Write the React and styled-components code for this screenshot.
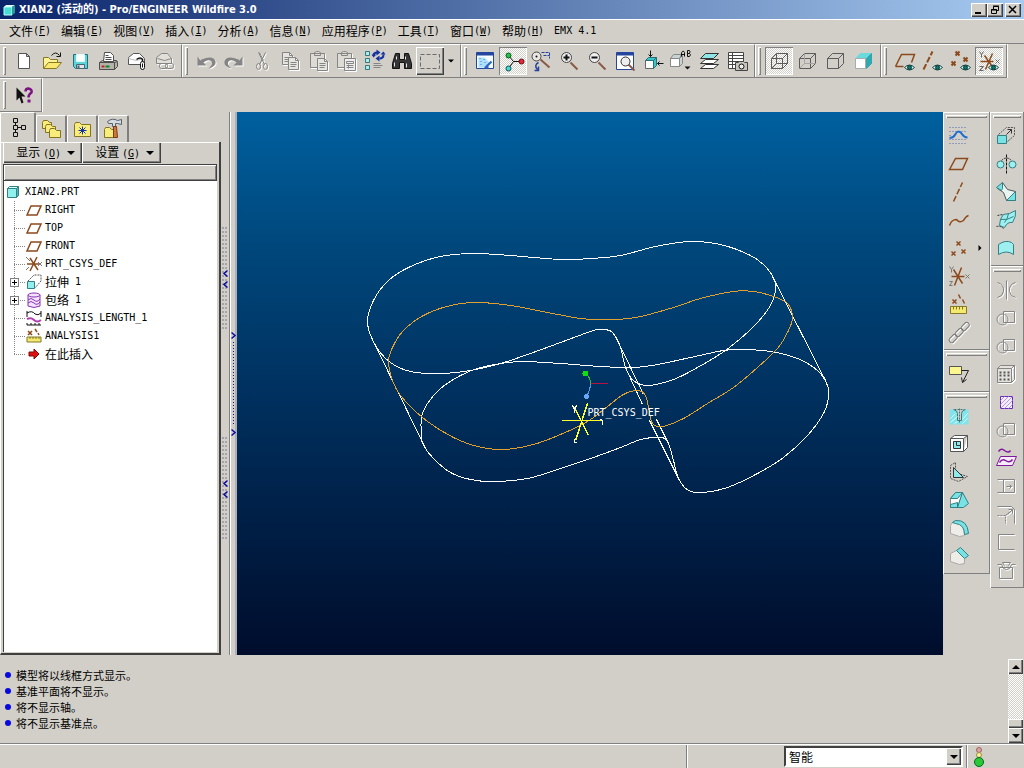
import React from 'react';
import styled, { createGlobalStyle, css } from 'styled-components';

const FACE = '#d2cfc8';
const SHADE = '#808080';
const DARK = '#404040';
const BROWN = '#8c4a1c';
const AQUA = '#8ff0ee';
const CJK = '"Noto Sans CJK SC", sans-serif';
const MONO = '"DejaVu Sans Mono", "Noto Sans CJK SC", monospace';

const GlobalStyle = createGlobalStyle`
  * { box-sizing: border-box; }
  body { margin: 0; background: ${FACE}; color: #000; font: 12px/16px ${CJK}; }
  button, select { font: inherit; color: inherit; margin: 0; padding: 0; border: 0; border-radius: 0; background: none; }
  ul { list-style: none; margin: 0; padding: 0; }
`;

const raised = css`
  background: ${FACE};
  box-shadow: inset 1px 1px 0 #fff, inset -1px -1px 0 ${DARK}, inset -2px -2px 0 ${SHADE};
`;
const checker = css`
  background: repeating-conic-gradient(#fff 0% 25%, ${FACE} 0% 50%) 0 0 / 2px 2px;
`;

const Page = styled.div`
  display: flex;
  flex-direction: column;
  min-height: 100vh;
`;

/* Title bar */
const TitleBar = styled.header`
  display: flex;
  align-items: center;
  height: 19px;
  padding: 0 3px;
  gap: 4px;
  background: linear-gradient(90deg, #0a246a, #a6caf0);
  color: #fff;
`;
const Title = styled.h1`
  flex: 1;
  margin: 0;
  font: bold 11px/16px "DejaVu Sans Condensed", "Noto Sans CJK SC", sans-serif;
`;
const WindowButtons = styled.div`
  display: flex;
`;
const WindowButton = styled.button`
  ${raised}
  display: grid;
  place-items: center;
  width: 16px;
  height: 14px;
  margin-left: ${(p) => (p.$apart ? '2px' : 0)};
`;

/* Menu */
const MenuBar = styled.nav`
  display: flex;
  align-items: center;
  gap: 10px;
  height: 25px;
  padding: 0 9px 2px;
  border-top: 1px solid #fff;
  border-bottom: 1px solid ${SHADE};
`;
const MenuItem = styled.button`
  display: flex;
  align-items: center;
  white-space: pre;
`;
const Latin = styled.span`
  font: 10px/16px ${MONO};
`;

/* Toolbars */
const ToolRow = styled.div`
  display: flex;
  height: 34px;
`;
const Handle = styled.span`
  flex: none;
  box-shadow: inset 1px 1px 0 #fff, inset -1px -1px 0 ${SHADE};
  width: ${(p) => (p.$flat ? 'auto' : '3px')};
  height: ${(p) => (p.$flat ? '3px' : '28px')};
  margin: ${(p) => (p.$flat ? '3px 2px 4px' : '0 4px 0 3px')};
`;
const ToolGroup = styled.div`
  display: flex;
  align-items: center;
  padding-right: 3px;
  border: solid;
  border-width: 1px 1px 1px 0;
  border-color: #fff ${SHADE} ${SHADE};
  box-shadow: 1px 0 0 #fff;
`;
const ToolButton = styled.button`
  position: relative;
  display: grid;
  place-items: center;
  width: 28px;
  height: 28px;
  flex: none;
  ${(p) => p.$pressed && css`
    ${checker}
    box-shadow: inset 1px 1px 0 ${SHADE}, inset -1px -1px 0 #fff;
  `}
  ${(p) => p.$raised && raised}
`;
const DropButton = styled.button`
  width: 13px;
  height: 28px;
  display: grid;
  place-items: center;
`;
const Drawing = styled.svg`
  display: block;
  flex: none;
  overflow: visible;
  fill: none;
  ${(p) => p.$dim && css`filter: drop-shadow(1px 1px 0 #fff);`}
`;

/* Work area */
const Work = styled.main`
  display: flex;
  flex: 1;
`;
const SidePanel = styled.aside`
  display: flex;
  flex-direction: column;
  width: 221px;
  flex: none;
`;
const Tabs = styled.div`
  display: flex;
  align-items: flex-end;
  height: 30px;
`;
const Tab = styled.button`
  display: grid;
  place-items: center;
  width: ${(p) => (p.$active ? '36px' : '31px')};
  height: ${(p) => (p.$active ? '30px' : '27px')};
  && {
    border-top: 1px solid #fff;
    border-left: 1px solid #fff;
    border-right: 2px solid ${SHADE};
    border-radius: 2px 2px 0 0;
  }
`;
const TabBody = styled.div`
  display: flex;
  flex-direction: column;
  flex: 1;
  padding: 0 2px 1px;
  border-right: 2px solid ${DARK};
  border-bottom: 2px solid ${DARK};
  border-left: 1px solid #fff;
  box-shadow: inset 0 1px 0 #fff;
`;
const PanelButtons = styled.div`
  display: flex;
  height: 21px;
`;
const PanelButton = styled.button`
  ${raised}
  display: flex;
  align-items: center;
  justify-content: flex-end;
  gap: 6px;
  width: 79px;
  padding-right: 7px;
`;
const ColumnHeader = styled.div`
  flex: none;
  height: 17px;
  margin-top: 1px;
  border: 1px solid ${DARK};
  box-shadow: inset 1px 1px 0 #fff, inset -1px -1px 0 ${SHADE};
`;
const Tree = styled.ul`
  flex: 1;
  background: #fff;
  border-left: 1px solid ${DARK};
  && { padding: 2px; }
`;
const TreeRow = styled.li`
  display: flex;
  align-items: center;
  height: 18px;
  white-space: pre;
`;
const Branch = styled.span`
  display: flex;
  align-items: center;
  justify-content: flex-start;
  width: 18px;
  height: 18px;
  margin-left: 2px;
  background:
    repeating-linear-gradient(180deg, #888 0 1px, transparent 1px 2px) 6px 0 / 1px ${(p) => (p.$last ? '9px' : '18px')} no-repeat,
    repeating-linear-gradient(90deg, #888 0 1px, transparent 1px 2px) 6px 9px / 12px 1px no-repeat;
`;
const Expander = styled.button`
  display: grid;
  place-items: center;
  width: 9px;
  height: 9px;
  margin-left: 2px;
  && { border: 1px solid ${SHADE}; background: #fff; }
`;
const TreeLabel = styled.span`
  display: flex;
  margin-left: 3px;
`;

const Splitter = styled.div`
  display: flex;
  width: 16px;
  flex: none;
`;
const GripColumn = styled.div`
  display: flex;
  flex-direction: column;
  align-items: center;
  justify-content: center;
  gap: 106px;
  width: 9px;
  border-right: 1px solid ${SHADE};
`;
const Grip = styled.button`
  display: flex;
  flex-direction: column;
  align-items: center;
  justify-content: center;
  gap: 4px;
  width: 6px;
  height: 104px;
  && {
    background:
      linear-gradient(#9a98a8, #9a98a8) 0 0 / 1px 1px,
      radial-gradient(circle at 1px 1px, #a4a2ac 1px, transparent 1px) 0 0 / 3px 4px;
    background-repeat: no-repeat, repeat;
  }
`;
const RailColumn = styled.div`
  display: flex;
  flex-direction: column;
  align-items: center;
  justify-content: center;
  width: 7px;
  border-left: 1px solid #fff;
  border-right: 2px solid #b0aeb8;
`;
const Rail = styled.button`
  display: flex;
  flex-direction: column;
  align-items: center;
  justify-content: space-between;
  height: 104px;
  && { background: repeating-linear-gradient(180deg, #101080 0 1px, transparent 1px 3px) 2px 10px / 1px 84px no-repeat; }
`;

const Viewport = styled.section`
  flex: 1;
  min-width: 0;
  display: flex;
  background: linear-gradient(180deg, #00609f 0%, #00477b 25%, #003261 50%, #001f46 75%, #000d2c 100%);
`;
const Model = styled.svg`
  width: 100%;
  fill: none;
  stroke-width: 1;
  shape-rendering: crispEdges;
  text { font: 10px "DejaVu Sans Mono", monospace; fill: #fff; }
`;

const SideTools = styled.div`
  display: flex;
  align-items: flex-start;
  flex: none;
`;
const SideColumn = styled.div`
  width: ${(p) => (p.$wide ? '47px' : '34px')};
  border-left: 1px solid #fff;
  border-right: 1px solid ${SHADE};
`;
const SideGroup = styled.div`
  display: flex;
  flex-direction: column;
  padding-bottom: 3px;
  border-bottom: 1px solid ${SHADE};
  box-shadow: inset 0 1px 0 #fff;
`;
const SideRow = styled.div`
  display: flex;
  align-items: center;
  padding-left: 1px;
  gap: 4px;
`;

/* Messages and status */
const MessageArea = styled.section`
  display: flex;
  align-items: flex-start;
  justify-content: space-between;
  height: 89px;
  padding: 4px 1px 0 5px;
  border-bottom: 1px solid ${SHADE};
`;
const MessageList = styled.ul`
  && { padding-top: 8px; }
`;
const Message = styled.li`
  display: flex;
  align-items: center;
  gap: 5px;
  height: 16px;
  font-size: 11px;
  &::before {
    content: '';
    width: 6px;
    height: 6px;
    border-radius: 3px;
    background: #0808e0;
  }
`;
const ScrollBar = styled.div`
  ${checker}
  display: flex;
  flex-direction: column;
  width: 15px;
  height: 84px;
`;
const ScrollButton = styled.button`
  ${raised}
  display: grid;
  place-items: center;
  height: 15px;
`;
const ScrollThumb = styled.div`
  ${raised}
  height: 9px;
  margin-top: auto;
`;
const StatusBar = styled.footer`
  display: flex;
  justify-content: flex-end;
  height: 24px;
  border-top: 1px solid #fff;
`;
const StatusCell = styled.div`
  display: flex;
  align-items: center;
  justify-content: flex-end;
  border-left: 1px solid ${SHADE};
  box-shadow: inset 1px 0 0 #fff;
  width: ${(p) => (p.$wide ? '280px' : '58px')};
  padding: ${(p) => (p.$wide ? '0 3px 0 0' : '0 39px 0 0')};
`;
const FilterBox = styled.label`
  position: relative;
  display: block;
  width: 179px;
  height: 21px;
  background: #fff;
  border: 2px solid;
  border-color: ${DARK} #fff #fff ${DARK};
`;
const FilterSelect = styled.select`
  && {
    appearance: none;
    display: block;
    width: 100%;
    height: 17px;
    padding: 0 20px 0 3px;
    line-height: 17px;
  }
`;
const FilterArrow = styled.span`
  ${raised}
  position: absolute;
  top: 0;
  right: 0;
  display: grid;
  place-items: center;
  width: 15px;
  height: 17px;
  pointer-events: none;
`;

const Arrow = ({ up, right, size = 8 }) => (
  <Drawing width={size} height={size} viewBox="0 0 8 8" aria-hidden="true">
    <path fill="#000" d={up ? 'M0 6h8L4 2z' : right ? 'M2 0v8l4-4z' : 'M0 2h8L4 6z'} />
  </Drawing>
);
const Chevron = ({ left }) => (
  <Drawing width="5" height="7" viewBox="0 0 5 7" aria-hidden="true">
    <path stroke="#0a0aa0" strokeWidth="1.500" d={left ? 'M4.500 .5L1 3.500l3.500 3' : 'M.5 .5L4 3.500l-3.500 3'} />
  </Drawing>
);

/* Icon drawings on a 24 unit grid */
const K = '#111';
const G = '#858585';
const Eye = () => (
  <g>
    <path fill="#e8f6f4" stroke="#184848" d="M11 18q5-5 10 0q-5 5-10 0z" />
    <circle cx="16" cy="18" r="2" fill="#0a7468" stroke="#053c38" />
  </g>
);
const crossAt = (x, y) => `M${x - 2} ${y - 2}l4 4m0-4l-4 4`;
const Paper = ({ x, y }) => (
  <path fill="#e6e4de" d={`M${x} ${y}h7l3 3v9h-10zM${x + 7} ${y}v3h3M${x + 2} ${y + 5}h6M${x + 2} ${y + 7}h6M${x + 2} ${y + 9}h5`} />
);
const Folder = ({ x, y, w = 12, h = 10 }) => (
  <path fill="#f8ec7c" stroke="#847420" d={`M${x} ${y + 2}l1-2h4l2 2h${w - 7}v${h - 2}h-${w}z`} />
);
const Cube = ({ hidden, full }) => (
  <g stroke="#5c5c5c">
    <path d="M4 9h11v10H4zM4 9l5-5h11l-5 5M20 4v10l-5 5" />
    {full && <path d="M9 4v10h11M9 14l-5 5" />}
    {hidden && <path stroke="#a5a5a5" d="M9 4v10h11M9 14l-5 5" />}
  </g>
);

const ICONS = {
  new: <path fill="#fff" stroke="#555" d="M6 4h8l3 3v12H6zM14 4v3h3" />,
  open: <g><path fill="#fcf298" stroke="#8a7820" d="M3 19V8h5l2 2h7v3" /><path fill="#fae870" stroke="#8a7820" d="M3 19l5-6h13l-5 6z" /><path stroke={K} d="M11 6q4-5 8 0m1-3v4h-4" /></g>,
  save: <g><path fill="#5cd4d8" stroke="#256f78" d="M5 5h14v14H7l-2-2z" /><path fill="#fff" stroke="#dff" d="M8 5h8v7H8z" /><path fill="#e5e5e5" stroke="#467" d="M8 15h8v4H8z" /><path fill="#467" d="M9 16h2v3H9z" /></g>,
  print: <g stroke="#4d4d4d"><path fill="#b5b2aa" d="M3 13l3-2h14l1 2v4l-3 3H3z" /><path d="M3 13h15v7M18 13l3-1" /><path fill="#fff" d="M7 12L8 3h6l3 3v6zM9 6h3M9 8h6M9 10h6" /><path stroke="#0a8830" strokeWidth="2" d="M9 17h4" /><path stroke="#c22" strokeWidth="2" d="M5 17h3" /></g>,
  mail: <g stroke="#555"><path fill="#fff" d="M4 15V8l5-4h6l5 5v6z" /><path d="M4 9l8 2 7-2" stroke="#bbb" /><path stroke={K} d="M12 10q4-3 6 0v5" strokeWidth="1.500" /><rect x="16" y="12" width="4" height="8" rx="2" fill="#fff" stroke={K} /><path stroke={K} d="M18 14v4" /></g>,
  link: <g stroke={G}><path fill="#e2dfd8" d="M4 14V8l5-4h6l4 5v5z" /><path d="M5 9l7 2 7-2" /><rect x="7" y="14" width="8" height="5" rx="2" /><rect x="13" y="14" width="8" height="5" rx="2" /></g>,
  undo: <path fill={G} d="M3 7v9h9l-3-3q5-4 8-1q2 3-3 7q8-2 7-7q-2-7-14-2l-1 1z" />,
  redo: <path fill={G} transform="translate(23 0) scale(-1 1)" d="M3 7v9h9l-3-3q5-4 8-1q2 3-3 7q8-2 7-7q-2-7-14-2l-1 1z" />,
  cut: <g stroke={G}><path d="M8 3l6 12M15 3L9 15M9 3l4 8" /><ellipse cx="8" cy="17" rx="2" ry="3" /><ellipse cx="15" cy="17" rx="2" ry="3" /></g>,
  copy: <g stroke={G}><Paper x={4} y={3} /><Paper x={10} y={8} /></g>,
  paste: <g stroke={G}><path fill="#dedbd4" d="M4 4h14v14H4zM8 6V3l2-1h2l2 1v3z" /><Paper x={11} y={9} /></g>,
  pasteSpecial: <g stroke={G}><path fill="#dedbd4" d="M3 4h14v14H3zM7 6V3l2-1h2l2 1v3z" /><path fill="#eee" d="M10 9h11v12H10zM12 12h7v2h-7zM12 16h7M12 18h7M14 15v4" /></g>,
  regen: <g><path fill="#aee" stroke="#37777a" d="M3 2h4v4H3zM3 9h4v4H3zM3 16h4v4H3z" /><path stroke="#1232a0" strokeWidth="2" d="M11 6q0-3 4-3M21 5q0 4-4 4" /><path fill="#1232a0" d="M14 0l4 3-4 3zM17 6v6l-4-3zM9 5h5l-3 3zM18 5l3-3 2 3z" /><path stroke={G} d="M11 14h7M11 16h9M11 18h7" /></g>,
  find: <g fill="#343434" stroke={K}><path d="M5 4h4v6h5V4h4l3 10v5h-7v-6h-5v6H2v-5z" /><path stroke="#e4e4e4" d="M6 7v3M4 13v4M15 7v3M16 14v4" /></g>,
  select: <rect x="2" y="5" width="19" height="14" stroke="#6a6a6a" strokeDasharray="4 2" />,
  repaint: <g><path fill="#f6fbff" stroke="#24469c" d="M3 3h17v16H3z" /><path fill="#24469c" d="M3 3h17v3H3z" /><path fill="#aee0fa" d="M5 8h6l6 6-4 4H5z" /><path stroke="#2b63c8" strokeWidth="2" d="M12 18l6-6M11 18h3v-3" /><path stroke="#3c7cd8" d="M6 9h1m3 1h1m-4 2h1m3 1h1m-5 2h1" /></g>,
  spin: <g><path stroke={K} d="M7 6l5 6h8M12 12l-5 7" /><circle cx="7" cy="6" r="2.500" fill="#22c244" stroke="#075818" /><circle cx="20" cy="12" r="2.500" fill="#e02838" stroke="#701018" /><circle cx="7" cy="19" r="2.500" fill="#4cd4d0" stroke="#075858" /></g>,
  orient: <g><path stroke="#8a5a48" strokeWidth="2" d="M11 10l9 8" /><circle cx="7" cy="7" r="4.500" fill="#e8e6e0" stroke="#444" /><circle cx="7" cy="7" r="1" fill={K} /><path stroke="#2440a0" strokeDasharray="3 1" d="M12 3h8M14 6h6M20 3v6" /><path stroke="#2440a0" strokeWidth="1.500" d="M9 13q-5 3-1 7m-3 1h4v-4" /></g>,
  zoomIn: <g><path stroke="#8a5a48" strokeWidth="2" d="M13 13l7 7" /><circle cx="9" cy="8" r="5" fill="#efefef" stroke="#444" /><path stroke={K} strokeWidth="2" d="M9 5v6M6 8h6" /></g>,
  zoomOut: <g><path stroke="#8a5a48" strokeWidth="2" d="M13 13l7 7" /><circle cx="9" cy="8" r="5" fill="#efefef" stroke="#444" /><path stroke={K} strokeWidth="2" d="M6 8h6" /></g>,
  refit: <g><path fill="#fff" stroke="#24469c" d="M3 3h17v17H3z" /><path fill="#24469c" d="M3 3h17v3H3z" /><path stroke="#8a5a48" strokeWidth="2" d="M15 15l6 6" /><circle cx="12" cy="12" r="4.500" fill="#eee" stroke="#333" /></g>,
  reorient: <g><path fill="#fff" stroke="#666" d="M4 11h8v8H4z" /><path fill="#3cc4c8" stroke="#256f78" d="M4 11l3-3h8l-3 3zM12 19l3-3V8l-3 3z" /><path stroke={K} d="M9 1v6M7 5l2 2 2-2M22 14h-6M18 12l-2 2 2 2" /></g>,
  saved: <g><path fill="#fff" stroke="#888" d="M1 9h9v8H1z" /><path fill="#c8d4d4" stroke="#888" d="M1 9l3-4h8l-2 4zM10 17l3-3V6l-3 3z" /><path stroke={K} d="M12 7V3q2-3 3 0v4M12 5h3M18 1v6h2q2-2 0-3q1-2 0-3zM18 4h2" /><path fill={K} d="M15 17h6l-3 3z" /></g>,
  layers: <g stroke="#333"><path fill="#fff" d="M3 19l5-4h13l-5 4z" /><path fill="#fff" d="M3 14l5-4h13l-5 4z" /><path fill="#8fe4e8" d="M3 9l5-5h13l-5 5z" /></g>,
  viewMgr: <g stroke="#444"><path fill="#fff" d="M3 3h15v16H3zM3 6h15M3 9h15M3 12h15M3 15h8M7 3v16" /><path fill="#c8c5bd" d="M10 13h3l1-1h4l1 1h3v8H10z" /><circle cx="16" cy="17" r="2.500" fill="#eee" stroke={K} /></g>,
  wire: <Cube full />,
  hiddenLine: <Cube hidden />,
  noHidden: <Cube />,
  shaded: <g><path fill="#6adadc" stroke="#6adadc" d="M4 9l5-5h11l-5 5z" /><path fill="#30a8b0" stroke="#30a8b0" d="M15 19l5-5V4l-5 5z" /><path fill="#fff" stroke="#aaa" d="M4 9h10v10H4z" /></g>,
  planeEye: <g><path stroke={BROWN} strokeWidth="1.500" d="M2 17L8 5h13l-3 8M2 17h8" /><Eye /></g>,
  axisEye: <g><path stroke={BROWN} strokeWidth="2" strokeDasharray="6 2" d="M2 20L11 2" /><Eye /></g>,
  pointEye: <g><path stroke={BROWN} strokeWidth="2" d={crossAt(8, 4) + crossAt(4, 14) + crossAt(16, 10)} /><Eye /></g>,
  csysEye: <g><path stroke={BROWN} strokeWidth="1.500" d="M3 12h13M15 4L8 20M7 6l7 10" /><path stroke="#666" d={'M2 2l2 3 2-3M4 5v3M2 17h4l-4 4h4' + crossAt(20, 12)} /><Eye /></g>,
  help: <g><path fill={K} d="M4 4v13l3-3 2 6 2-1-2-6h4z" /><path stroke="#7b1480" strokeWidth="2.500" d="M13 8q0-3 3-3q4 1 3 4q-3 2-3 5" /><path fill="#7b1480" d="M15 16h3v3h-3z" /></g>,
  tree: <path stroke={K} d="M7 2h4v4H7zM7 9h4v4H7zM7 16h4v4H7zM15 9h4v4h-4zM9 6v3M9 13v3M11 11h4" />,
  folders: <g><Folder x={3} y={3} w={9} h={8} /><Folder x={6} y={7} w={10} h={8} /><Folder x={10} y={11} w={11} h={9} /></g>,
  favorites: <g><Folder x={4} y={5} w={16} h={14} /><path stroke="#1232a0" d="M12 9v8M8 13h8M9 10l6 6M15 10l-6 6" /></g>,
  hammer: <g><Folder x={3} y={10} w={10} h={10} /><path fill="#d6dde2" stroke="#56616a" d="M6 4q5-4 10-1l4-1v5l-4-1h-2v3h-3V6H7z" /><path fill="#d0783c" stroke="#7a3c14" d="M12 9h3l1 11h-4z" /></g>,
  sketch: <g><path stroke="#2438a0" strokeDasharray="1 2" d="M2 3h18M2 7h18M2 11h1M2 15h18M2 19h18" opacity=".7" /><path stroke="#1c6cd0" strokeWidth="2" d="M2 13c6 2 5-6 9-6s3 6 9 6" /></g>,
  plane: <path stroke={BROWN} strokeWidth="1.500" d="M2 17L8 6h12l-5 11z" />,
  axis: <path stroke={BROWN} strokeWidth="1.500" strokeDasharray="6 2" d="M6 21L15 2" />,
  curve: <path stroke={BROWN} strokeWidth="1.500" d="M2 17q2-6 7-6q3 4 7 1q2-4 5-5" />,
  points: <path stroke={BROWN} strokeWidth="1.500" d={crossAt(11, 7) + crossAt(6, 17) + crossAt(16, 15)} />,
  csys: <g><path stroke={BROWN} strokeWidth="1.500" d="M4 12h13M14 3L7 21M6 5l9 14" /><path stroke="#777" d={'M2 2l2 3 2-3M4 5v3M2 17h3l-3 4h3' + crossAt(20, 12)} /></g>,
  analysis: <g><path stroke={BROWN} strokeWidth="1.500" d={crossAt(7, 9) + 'M11 2l2 4M15 7l2 4'} /><path fill="#f4ea70" stroke="#857828" d="M3 14h16v7H3zM6 14v3M9 14v3M12 14v3M15 14v3" /></g>,
  chain: <g stroke="#777"><rect x="-4" y="-2" width="9" height="5" rx="2" transform="translate(5 18) rotate(-45)" /><rect x="-4" y="-2" width="9" height="5" rx="2" transform="translate(11 12) rotate(-45)" /><rect x="-4" y="-2" width="9" height="5" rx="2" transform="translate(17 6) rotate(-45)" /></g>,
  note: <g><path fill="#fbf68e" stroke="#555" d="M2 4h12v8H2z" /><path stroke="#222" d="M14 8h7l-6 12M14 15l1 5 4-3" /></g>,
  hole: <g><path fill="#83e3ea" d="M2 5h4q4 1 4 4v7h4V9q0-3 4-4h3v15H2z" /><path stroke="#3e7c80" d="M6 5q4 1 4 4v7h4V9q0-3 4-4" /><path stroke="#3e7c80" strokeDasharray="2 1" d="M12 4v14M7 5h10" /><path stroke="#d6ffff" d="M3 14l5-5M3 18l7-6M7 19l3-2M15 15l5-6M15 19l5-5" /></g>,
  shell: <g><path fill="#fff" stroke="#555" d="M3 6h13v13H3zM3 6l4-3h13l-4 3M20 3v12l-4 4" /><path fill="#8eeaea" stroke="#333" d="M6 9h7v7H6z" /><path stroke="#333" d="M9 9v4h4" /></g>,
  rib: <g><path stroke="#555" strokeDasharray="2 1" d="M3 5l5-3v10l12 4-9 5-8-3z" /><path fill="#8eeaea" stroke="#333" d="M6 7v10h10z" /></g>,
  draft: <g><path fill="#fff" stroke="#888" d="M3 10l5-6h7l-5 15H3z" /><path fill="#78e2e4" stroke="#338085" d="M10 19l5-15 6 11-5 4zM3 16l7-2v5H3zM3 10l5-6h7l-5 6z" /></g>,
  round: <g><path fill="#efede8" stroke="#aaa" d="M3 9q1-3 5-5l6 4q3 3 3 11l-5 1-9-3z" /><path fill="#78e2e4" stroke="#338085" d="M8 4q12-1 13 13l-4 1q0-10-9-11l-3-1z" /></g>,
  chamfer: <g><path fill="#efede8" stroke="#aaa" d="M3 9l6-3 8 8v5l-5 1-9-3z" /><path fill="#78e2e4" stroke="#338085" d="M9 6l4-3 8 8-4 3z" /></g>,
  extrude: <g><path stroke="#555" strokeDasharray="2 1" d="M4 10l8-7h8v8l-8 7" /><path fill="#78e2e4" stroke="#338085" d="M3 11h9v8H3z" /><path stroke="#333" d="M12 10l5-5m-4 0h4v4" /></g>,
  revolve: <g><path stroke={K} strokeDasharray="3 1" d="M12 2v19" /><circle cx="6" cy="12" r="3.500" fill="#9ef0f0" stroke="#338085" /><circle cx="18" cy="12" r="3.500" fill="#9ef0f0" stroke="#338085" /><path stroke="#333" strokeDasharray="2 1" d="M7 8q5-5 10 0" /></g>,
  blend: <g><path fill="#e8f4f2" stroke="#555" d="M8 2l5 7 8 2v9h-9l-3-8-6-4z" /><path fill="#78e2e4" stroke="#338085" d="M2 7l6-5v6l-1 2zM12 20l9-9v9z" /></g>,
  sweep: <g><path fill="#9ef0f0" stroke="#338085" d="M5 17q0-7 4-11q6 0 12-4q1 6-3 12q-5-1-8 5z" /><path stroke="#338085" d="M6 11q7 1 13-3M14 5q-1 6-4 9" /><path stroke="#333" strokeDasharray="2 1" d="M2 18q4-1 7 2M3 7l5-1" /></g>,
  surface: <path fill="#9ef0f0" stroke="#338085" d="M4 18V8q7-5 13-2l2 2v10q-7-5-15 0z" />,
  mirror: <path stroke={G} d="M12 2v19M3 4q7 2 6 9q-1 5-6 6M21 4q-7 2-6 9q1 5 6 6" />,
  merge: <g stroke={G}><circle cx="8" cy="13" r="5.500" /><path d="M9 5h11v11H9z" /></g>,
  pattern: <g stroke={G}><path fill="#e4e2dc" d="M3 6h14v14H3zM3 6l3-3h14l-3 3M20 3v14l-3 3" /><path stroke="#555" strokeDasharray="2 2" strokeWidth="2" d="M5 10h10M5 13h10M5 17h10" /></g>,
  fill: <g><path fill="#f4ecff" stroke="#6a2cb8" d="M6 6h12v12H6z" /><path stroke="#b79ae4" d="M6 10l4-4M6 14l8-8M6 18L18 6M10 18l8-8M14 18l4-4" /></g>,
  wrap: <g stroke="#80189c" strokeWidth="1.500"><path d="M4 5q3-4 6-1q4 3 6 0" /><path fill="#f6ecfb" strokeWidth="1" d="M2 19l4-9h16l-4 9z" /><path d="M5 16q3-4 6-2q4 3 7-1" /></g>,
  extend: <path stroke={G} d="M3 5h17v13H3M9 5v13M12 12h5m-2-2l2 2-2 2" />,
  offset: <g stroke={G}><path d="M3 4h14l3 3v14M13 12l5-5m-4 0h4v4" /><path strokeDasharray="2 1" d="M3 13h8v8M11 13l3-3" /></g>,
  trim: <path stroke={G} d="M20 4H4v15h16" />,
  thicken: <path stroke={G} d="M5 9h13v11H5zM3 6h4l2 4q3 2 6 0l2-4h4M8 4l2 3M16 4l-2 3M8 4h8" />,
};

const Icon = ({ name, size = 24, dim }) => (
  <Drawing $dim={dim} width={size} height={size} viewBox="0 0 24 24" aria-hidden="true">
    <g transform="translate(.5 .5)">{ICONS[name]}</g>
  </Drawing>
);

/* Tree drawings on a 16 unit grid */
const TREE_ICONS = {
  part: <g stroke="#338085"><path fill={AQUA} d="M1.500 4.500h9v9h-9z" /><path fill="#d5ffff" d="M1.500 4.500l2-2h9l-2 2z" /><path fill="#4cb8bc" d="M10.500 13.500l2-2v-9l-2 2z" /></g>,
  plane: <path stroke={BROWN} strokeWidth="1.500" d="M1 13l4-9h10l-4 9z" />,
  csys: <g><path stroke={BROWN} strokeWidth="1.500" d="M1 8h12M11 1L4 15M4 2l8 12" /><path stroke="#777" d="M0 1l4 4M0 14l3-3M12 6l4 4m0-4l-4 4" /></g>,
  extrude: <g><path stroke="#555" strokeDasharray="2 1" d="M2 7l6-6h7v6l-6 7" /><path fill={AQUA} stroke="#338085" d="M1.500 7.500h7v7h-7z" /></g>,
  wrap: <g stroke="#8a30b8" fill="#f3e4fb"><path d="M2 3v11q6 3 12 0V3" /><ellipse cx="8" cy="3" rx="6" ry="2" /><path fill="none" d="M2 8q3-3 6 0t6-1M2 11q3-3 6 0t6-1" /></g>,
  length: <g><path stroke={K} d="M1 1v6M15 1v6M1 3q5-3 8 1q3 2 6-1M1 15h14M1 13v2M5 13v2M9 13v2M13 13v2" /><path stroke="#b040b0" strokeWidth="2" d="M1 9q4-2 7 1t7 0" /></g>,
  analysis: <g><path stroke={BROWN} strokeWidth="1.500" d="M2 3l4 4m0-4L2 7M9 1l2 3M12 5l1 2" /><path fill="#f4ea70" stroke="#857828" d="M1 9h14v5H1zM4 9v2M7 9v2M10 9v2M13 9v2" /></g>,
  insert: <path fill="#e01010" stroke="#800808" d="M3 6h5V3l5 5-5 5v-3H3z" />,
};
const TreeIcon = ({ name }) => (
  <Drawing width="16" height="16" viewBox="0 0 16 16" aria-hidden="true">{TREE_ICONS[name]}</Drawing>
);

/* A CJK caption followed by its underlined shortcut letter */
const Caption = ({ text, hotkey }) => (
  <>
    {text}
    {hotkey && <Latin>(<u>{hotkey}</u>)</Latin>}
  </>
);

const MENUS = [
  ['文件', 'F'], ['编辑', 'E'], ['视图', 'V'], ['插入', 'I'], ['分析', 'A'],
  ['信息', 'N'], ['应用程序', 'P'], ['工具', 'T'], ['窗口', 'W'], ['帮助', 'H'],
];

const TOOLBARS = [
  [['new', '新建'], ['open', '打开'], ['save', '保存'], ['print', '打印'], ['mail', '邮件'], ['link', '链接', 'dim']],
  [['undo', '撤消', 'dim'], ['redo', '重做', 'dim'], ['cut', '剪切', 'dim'], ['copy', '复制', 'dim'], ['paste', '粘贴', 'dim'],
    ['pasteSpecial', '选择性粘贴', 'dim'], ['regen', '再生'], ['find', '查找'], ['select', '选取', 'drop']],
  [['repaint', '重画'], ['spin', '旋转中心', 'pressed'], ['orient', '定向模式'], ['zoomIn', '放大'], ['zoomOut', '缩小'],
    ['refit', '重新调整'], ['reorient', '重定向'], ['saved', '已保存视图'], ['layers', '层'], ['viewMgr', '视图管理器']],
  [['wire', '线框', 'pressed'], ['hiddenLine', '隐藏线'], ['noHidden', '无隐藏线'], ['shaded', '着色']],
  [['planeEye', '基准平面'], ['axisEye', '基准轴'], ['pointEye', '基准点'], ['csysEye', '坐标系', 'pressed']],
];

const TREE = [
  ['plane', '', 'RIGHT'], ['plane', '', 'TOP'], ['plane', '', 'FRONT'], ['csys', '', 'PRT_CSYS_DEF'],
  ['extrude', '拉伸', ' 1', true], ['wrap', '包络', ' 1', true], ['length', '', 'ANALYSIS_LENGTH_1'],
  ['analysis', '', 'ANALYSIS1'], ['insert', '在此插入', ''],
];

const DATUM_TOOLS = [
  ['sketch', 'plane', 'axis', 'curve', 'points', 'csys', 'analysis', 'chain'],
  ['note'],
  ['hole', 'shell', 'rib', 'draft', 'round', 'chamfer'],
];
const FEATURE_TOOLS = [
  ['extrude', 'revolve', 'blend', 'sweep', 'surface'],
  ['mirror', 'merge', 'merge', 'pattern', 'fill', 'merge', 'wrap', 'extend', 'offset', 'trim', 'thicken'],
];
const DIM_TOOLS = ['mirror', 'merge', 'pattern', 'extend', 'offset', 'trim', 'thicken', 'chain'];

const MESSAGES = ['模型将以线框方式显示。', '基准平面将不显示。', '将不显示轴。', '将不显示基准点。'];

/* Closed smooth curve through a list of points */
function smooth(points) {
  const n = points.length;
  let d = `M${points[0]}`;
  for (let i = 0; i < n; i += 1) {
    const [p0, p1, p2, p3] = [-1, 0, 1, 2].map((k) => points[(i + k + n) % n]);
    const c1 = [p1[0] + (p2[0] - p0[0]) / 6, p1[1] + (p2[1] - p0[1]) / 6];
    const c2 = [p2[0] - (p3[0] - p1[0]) / 6, p2[1] - (p3[1] - p1[1]) / 6];
    d += `C${c1} ${c2} ${p2}`;
  }
  return d;
}

const UPPER = [[367, 322], [373, 300], [388, 280], [410, 266], [440, 256], [473, 253], [510, 255], [560, 259], [590, 258],
  [620, 255], [655, 246], [690, 241], [720, 244], [750, 255], [766, 267], [774, 280], [775, 291], [770, 305], [757, 322],
  [740, 338], [722, 352], [697, 367], [673, 379], [647, 385], [633, 380], [625, 367], [620, 347], [612, 332], [603, 329],
  [593, 330], [560, 342], [527, 354], [500, 363], [470, 370], [440, 373], [410, 371], [390, 362], [375, 345]];
const LOWER = [[421, 437], [421, 417], [427, 403], [440, 388], [460, 375], [477, 368], [500, 363], [523, 361], [560, 363],
  [600, 366], [633, 367], [657, 364], [690, 357], [723, 350], [743, 349], [770, 351], [797, 358], [817, 370], [827, 385],
  [828, 397], [823, 413], [807, 435], [783, 457], [757, 473], [727, 487], [703, 492], [688, 490], [678, 478], [673, 460],
  [668, 443], [662, 437], [653, 437], [640, 439], [620, 447], [590, 458], [560, 468], [527, 478], [493, 481], [470, 479],
  [450, 472], [433, 458], [423, 445]];
const WRAPPED = [[388, 363], [392, 347], [403, 330], [423, 315], [450, 305], [477, 302], [510, 305], [547, 312], [580, 318],
  [600, 319], [617, 319], [640, 316], [673, 307], [700, 298], [733, 291], [753, 291], [773, 296], [787, 303], [792, 317],
  [788, 330], [777, 348], [757, 367], [733, 387], [707, 403], [683, 418], [662, 426], [652, 423], [649, 412], [645, 395],
  [637, 390], [623, 394], [607, 406], [587, 421], [560, 434], [533, 444], [503, 449], [477, 446], [453, 437], [427, 421],
  [407, 403], [395, 387]];

const ToolButtons = ({ tools }) => (
  <ToolGroup>
    <Handle />
    {tools.map(([name, label, state]) => (
      <React.Fragment key={name}>
        <ToolButton aria-label={label} $pressed={state === 'pressed'} $raised={state === 'drop'}>
          <Icon name={name} dim={state === 'dim'} />
        </ToolButton>
        {state === 'drop' && <DropButton aria-label="选取方式"><Arrow size={6} /></DropButton>}
      </React.Fragment>
    ))}
  </ToolGroup>
);

const SideGroups = ({ groups, wide }) => (
  <SideColumn $wide={wide}>
    {groups.map((group) => (
      <SideGroup key={group[0]}>
        <Handle $flat />
        {group.map((name, i) => (
          <SideRow key={i}>
            <ToolButton aria-label={name}><Icon name={name} dim={DIM_TOOLS.includes(name)} /></ToolButton>
            {name === 'points' && <Arrow right size={6} />}
          </SideRow>
        ))}
      </SideGroup>
    ))}
  </SideColumn>
);

export default function App() {
  return (
    <Page>
      <GlobalStyle />
      <TitleBar>
        <Drawing width="12" height="12" viewBox="0 0 12 12" aria-hidden="true">
          <path fill="#48dcd4" stroke="#b8fff8" d="M1 3h8v8H1z" />
          <path fill="#d8ffff" d="M1 3l2-2h9L9 3z" />
          <path fill="#2a9a9a" d="M9 11l3-2V1L9 3z" />
        </Drawing>
        <Title>XIAN2 (活动的) - Pro/ENGINEER Wildfire 3.0</Title>
        <WindowButtons>
          <WindowButton aria-label="最小化">
            <Drawing width="10" height="10" viewBox="0 0 10 10"><path fill="#000" d="M1 7h6v2H1z" /></Drawing>
          </WindowButton>
          <WindowButton aria-label="还原">
            <Drawing width="10" height="10" viewBox="0 0 10 10"><path stroke="#000" d="M3.500 4V1.500h5v4H7M1.500 4.500h5v4h-5zM3 1h6M1 5h6" /></Drawing>
          </WindowButton>
          <WindowButton aria-label="关闭" $apart>
            <Drawing width="10" height="10" viewBox="0 0 10 10"><path stroke="#000" strokeWidth="1.500" d="M1 1l7 7M8 1L1 8" /></Drawing>
          </WindowButton>
        </WindowButtons>
      </TitleBar>

      <MenuBar>
        {MENUS.map(([text, hotkey]) => (
          <MenuItem key={text}><Caption text={text} hotkey={hotkey} /></MenuItem>
        ))}
        <MenuItem><Latin>EMX 4.1</Latin></MenuItem>
      </MenuBar>

      <ToolRow>
        {TOOLBARS.map((tools) => <ToolButtons key={tools[0][0]} tools={tools} />)}
      </ToolRow>
      <ToolRow>
        <ToolButtons tools={[['help', '上下文帮助']]} />
      </ToolRow>

      <Work>
        <SidePanel>
          <Tabs>
            <Tab $active aria-label="模型树"><Icon name="tree" /></Tab>
            <Tab aria-label="文件夹"><Icon name="folders" /></Tab>
            <Tab aria-label="收藏夹"><Icon name="favorites" /></Tab>
            <Tab aria-label="连接"><Icon name="hammer" /></Tab>
          </Tabs>
          <TabBody>
            <PanelButtons>
              <PanelButton><span><Caption text="显示 " hotkey="O" /></span><Arrow /></PanelButton>
              <PanelButton><span><Caption text="设置 " hotkey="G" /></span><Arrow /></PanelButton>
            </PanelButtons>
            <ColumnHeader />
            <Tree>
              <TreeRow><TreeIcon name="part" /><TreeLabel><Latin>XIAN2.PRT</Latin></TreeLabel></TreeRow>
              {TREE.map(([icon, cjk, latin, expandable], i) => (
                <TreeRow key={cjk + latin}>
                  <Branch $last={i === TREE.length - 1}>
                    {expandable && (
                      <Expander aria-label="展开">
                        <Drawing width="5" height="5" viewBox="0 0 5 5"><path fill="#000" d="M2 0h1v5H2zM0 2h5v1H0z" /></Drawing>
                      </Expander>
                    )}
                  </Branch>
                  <TreeIcon name={icon} />
                  <TreeLabel>{cjk}<Latin>{latin}</Latin></TreeLabel>
                </TreeRow>
              ))}
            </Tree>
          </TabBody>
        </SidePanel>

        <Splitter>
          <GripColumn>
            <Grip aria-label="收起"><Chevron left /><Chevron left /></Grip>
            <Grip aria-label="收起"><Chevron left /><Chevron left /></Grip>
          </GripColumn>
          <RailColumn>
            <Rail aria-label="展开"><Chevron /><Chevron /></Rail>
          </RailColumn>
        </Splitter>

        <Viewport>
          <Model viewBox="237 112 706 543" role="img" aria-label="PRT_CSYS_DEF">
            <g transform="translate(.5 .5)">
              <g stroke="#fff">
                <path d={smooth(UPPER)} />
                <path d={smooth(LOWER)} />
                <path d="M371 337L425 448M773 278L825 380M618 342L643 394M656 419L668 443M625 367L642 404M649 420L678 478" />
              </g>
              <path stroke="#e0a030" d={smooth(WRAPPED)} />
              <path stroke="#28c040" d="M585 373q5 4 5 10" />
              <path stroke="#5898e8" d="M590 383q0 6-4 13" />
              <path stroke="#b81040" d="M590 383h17" />
              <circle cx="585" cy="373" r="3" fill="#10e010" />
              <circle cx="586" cy="396" r="2.500" fill="#68a8f8" />
              <path stroke="#ffff30" strokeWidth="1.500" d="M561 420h41M587 403l-12 37M574 407l14 28" />
              <path stroke="#fff" d="M572 405l2 4M576 405l-2 4v3M574 438v4h2M600 419l2 1v4" />
              <text x="587" y="415">PRT_CSYS_DEF</text>
            </g>
          </Model>
        </Viewport>

        <SideTools>
          <SideGroups groups={DATUM_TOOLS} wide />
          <SideGroups groups={FEATURE_TOOLS} />
        </SideTools>
      </Work>

      <MessageArea>
        <MessageList>
          {MESSAGES.map((m) => <Message key={m}>{m}</Message>)}
        </MessageList>
        <ScrollBar>
          <ScrollButton aria-label="向上"><Arrow up /></ScrollButton>
          <ScrollThumb />
          <ScrollButton aria-label="向下"><Arrow /></ScrollButton>
        </ScrollBar>
      </MessageArea>
      <StatusBar>
        <StatusCell $wide>
          <FilterBox>
            <FilterSelect aria-label="选取过滤器" defaultValue="智能">
              <option>智能</option>
            </FilterSelect>
            <FilterArrow><Arrow /></FilterArrow>
          </FilterBox>
        </StatusCell>
        <StatusCell>
          <Drawing width="12" height="20" viewBox="0 0 12 20" aria-hidden="true">
            <circle cx="6" cy="3" r="2.500" fill="#d8a8a0" stroke="#a06060" />
            <circle cx="6" cy="8" r="2.500" fill="#f4f0a0" stroke="#a09040" />
            <circle cx="6" cy="15" r="4.500" fill="#28c838" stroke="#086818" />
          </Drawing>
        </StatusCell>
      </StatusBar>
    </Page>
  );
}
